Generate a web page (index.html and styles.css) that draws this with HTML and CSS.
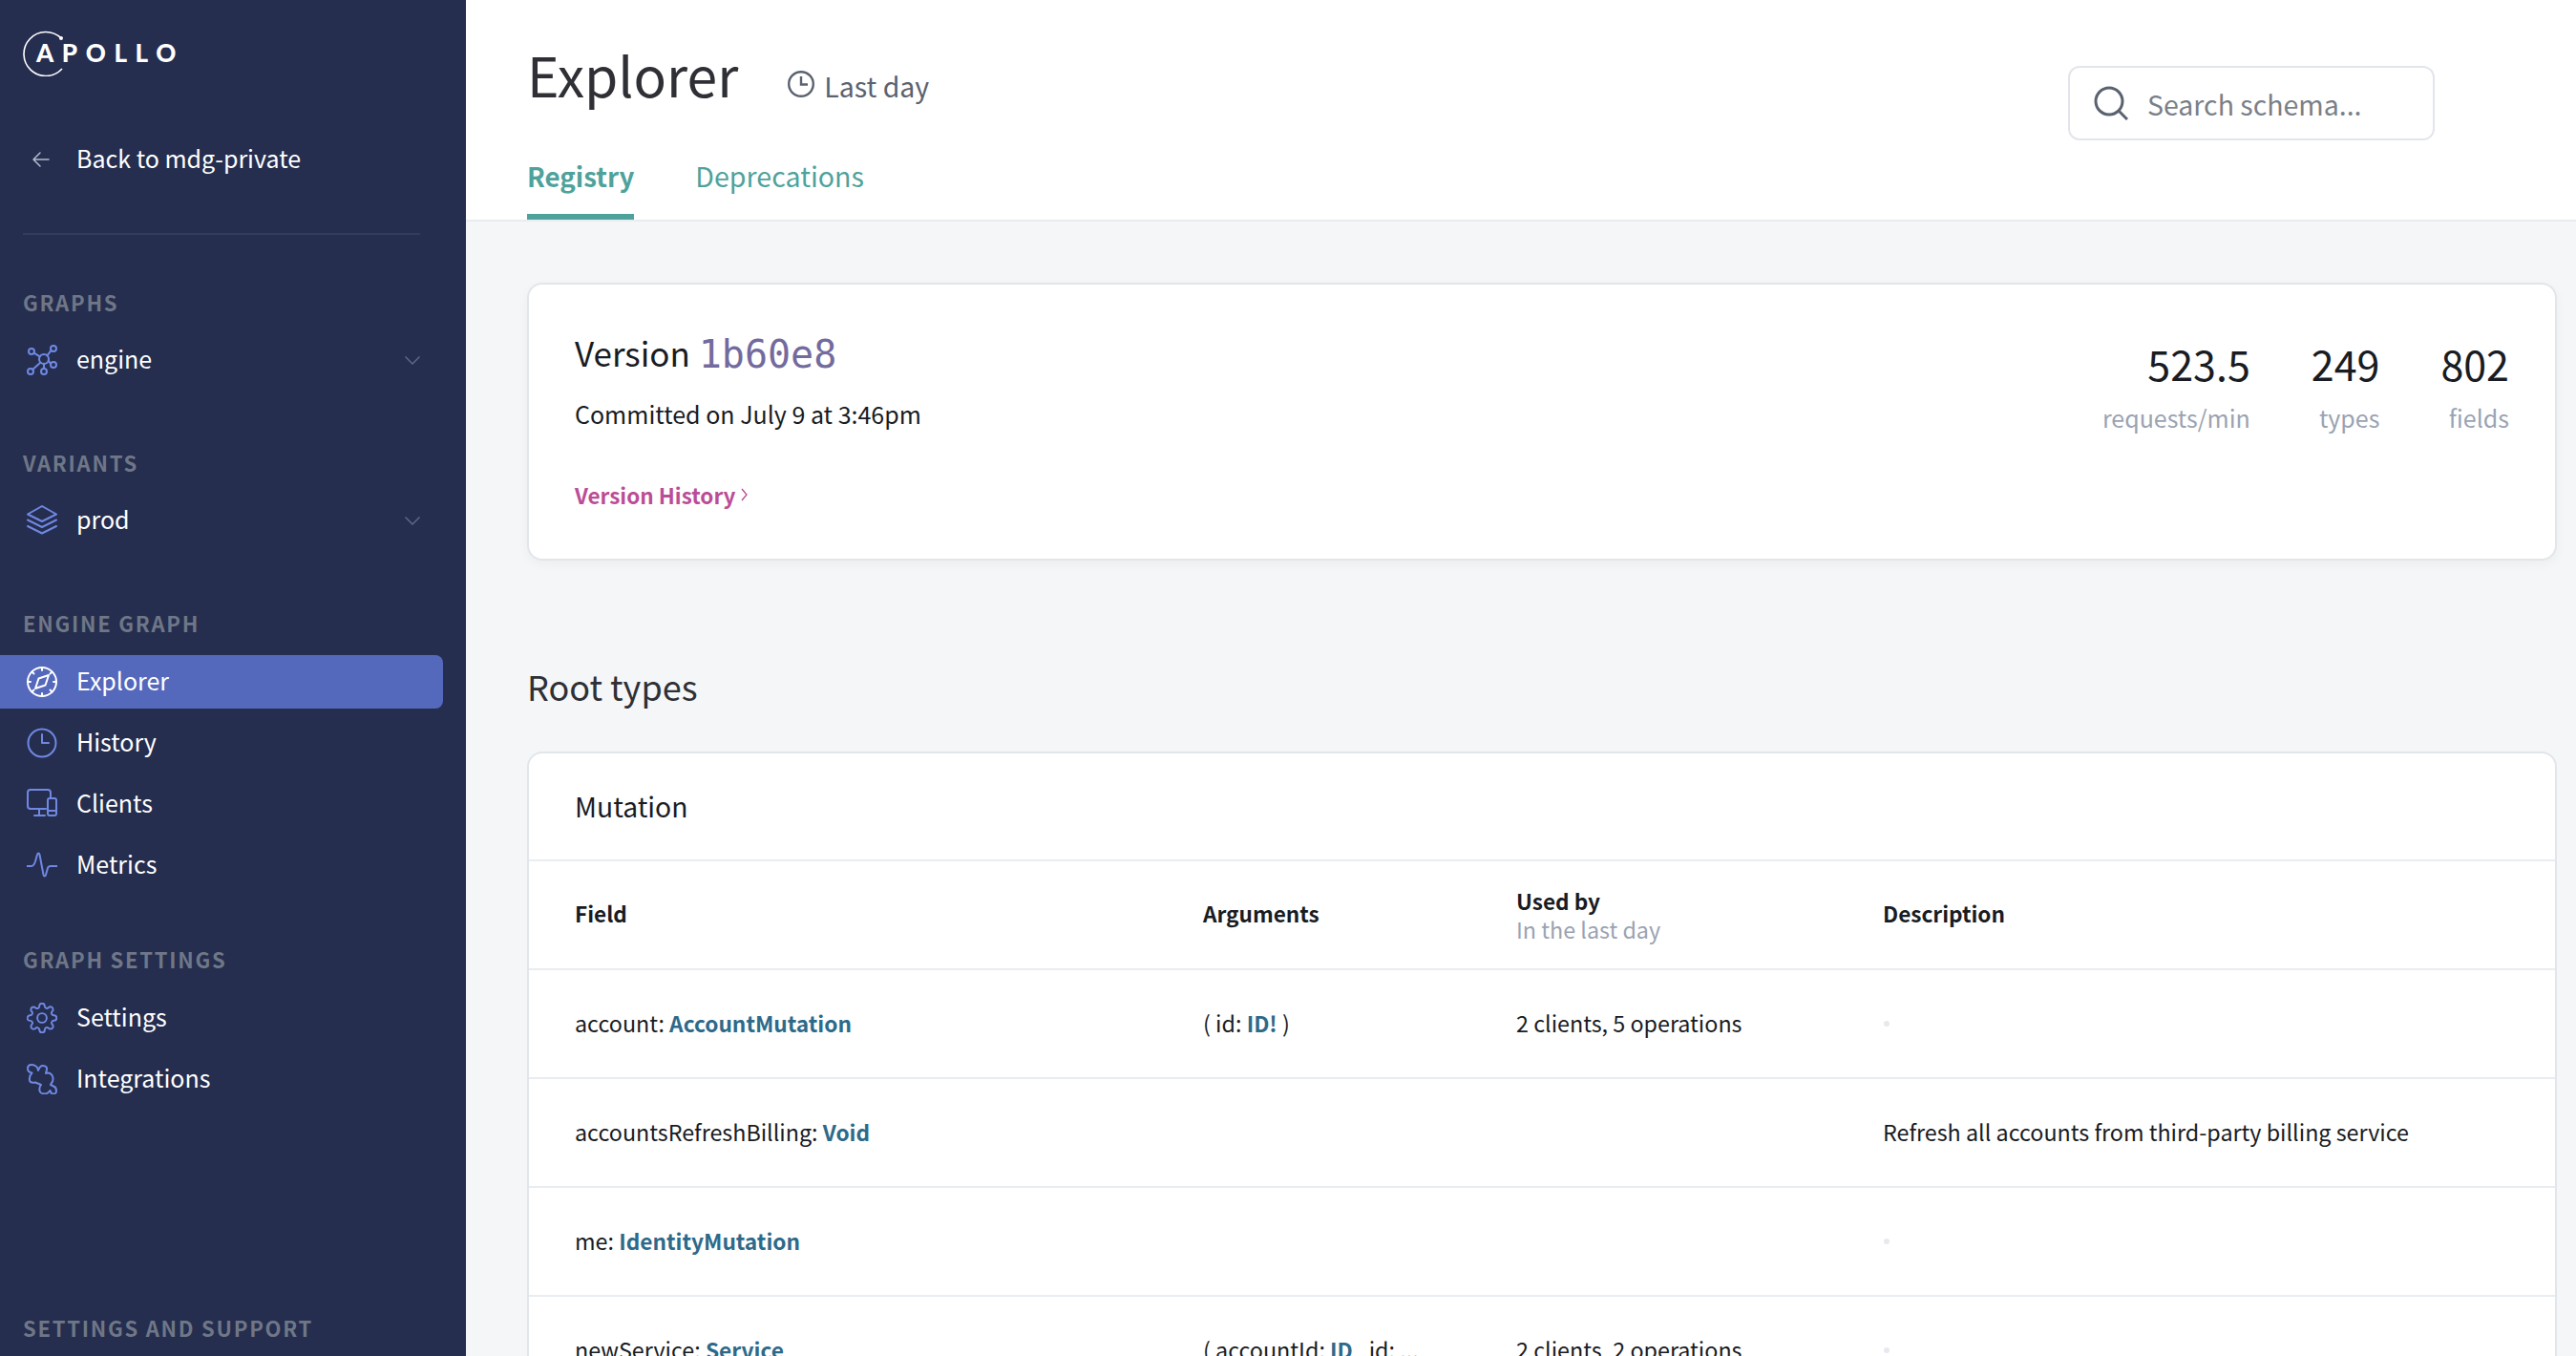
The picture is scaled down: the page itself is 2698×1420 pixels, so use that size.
FILE: index.html
```html
<!DOCTYPE html>
<html lang="en">
<head>
  <meta charset="UTF-8">
  <title>Explorer</title>
  <link rel="stylesheet" href="styles.css">
</head>
<body>
  <aside class="sidebar">
    <div class="logo">
      <svg class="logo-ring" viewBox="0 0 48 48"><path d="M40 8A23 23 0 1 0 41 40" fill="none" stroke="#fff" stroke-width="1.6"/><circle cx="40" cy="8" r="2" fill="#fff"/></svg>
      <span class="logo-text">APOLLO</span>
    </div>
    <a class="nav-row back">
      <svg class="icon back-arrow" viewBox="0 0 32 32"><path d="M23 16H8M14 9l-7 7 7 7"/></svg>
      Back to mdg-private
    </a>
    <div class="divider"></div>

    <div class="section section-select">
      <div class="section-label">Graphs</div>
      <a class="nav-row">
        <svg class="icon" viewBox="0 0 32 32"><circle cx="18" cy="15" r="5"/><circle cx="5" cy="7" r="3"/><circle cx="28" cy="4" r="3"/><circle cx="28" cy="21" r="3"/><circle cx="4" cy="28" r="3"/><circle cx="18" cy="28" r="3"/><path d="M7.600 8.600L13.700 12.400M25.600 5.800L21.400 11.400M25.100 20.200L22.800 16.600M6.200 26L14.500 18.600M18 25V20"/></svg>
        engine
        <svg class="chevron" viewBox="0 0 16 9"><path d="M0.500 0.500L8 8L15.500 0.500"/></svg>
      </a>
    </div>

    <div class="section section-select">
      <div class="section-label">Variants</div>
      <a class="nav-row">
        <svg class="icon" viewBox="0 0 32 32"><path d="M16 1L31 9.500L16 17L1 9.500Z"/><path d="M1 15.500L16 23L31 15.500M1 22L16 29.500L31 22"/></svg>
        prod
        <svg class="chevron" viewBox="0 0 16 9"><path d="M0.500 0.500L8 8L15.500 0.500"/></svg>
      </a>
    </div>

    <div class="section">
      <div class="section-label">Engine Graph</div>
      <a class="nav-row active">
        <svg class="icon" viewBox="0 0 32 32"><circle cx="16" cy="16" r="15"/><path d="M16 1v3M16 28v3M1 16h3M28 16h3M5.500 5.500l2 2M24.500 24.500l2 2M26.500 5.500l-2 2M7.500 24.500l-2 2"/><path d="M23 9L19.500 19.500L9 23L12.500 12.500Z"/></svg>
        Explorer
      </a>
      <a class="nav-row">
        <svg class="icon" viewBox="0 0 32 32"><circle cx="16" cy="16" r="14.500"/><path d="M16 7V16H23"/></svg>
        History
      </a>
      <a class="nav-row">
        <svg class="icon" viewBox="0 0 32 32"><path d="M20 21H4a3 3 0 0 1-3-3V4a3 3 0 0 1 3-3h18a3 3 0 0 1 3 3v6"/><path d="M13 21v7M8 28h11"/><rect x="22" y="10" width="9" height="18" rx="2"/><path d="M22 23h9"/></svg>
        Clients
      </a>
      <a class="nav-row">
        <svg class="icon" viewBox="0 0 32 32"><path d="M0 17H5C7 17 8 15 9 12L11 5C11.500 3 13 3 13.500 5L17.500 26C18 28 19.500 28 20 26L22 19C22.500 17.500 23 17 25 17H32"/></svg>
        Metrics
      </a>
    </div>

    <div class="section">
      <div class="section-label">Graph Settings</div>
      <a class="nav-row">
        <svg class="icon icon-thin" viewBox="0.500 0.500 23 23"><circle cx="12" cy="12" r="3.500"/><path d="M19.400 15a1.650 1.650 0 0 0 .33 1.820l.06.06a2 2 0 0 1 0 2.830 2 2 0 0 1-2.830 0l-.06-.06a1.650 1.650 0 0 0-1.820-.33 1.650 1.650 0 0 0-1 1.510V21a2 2 0 0 1-2 2 2 2 0 0 1-2-2v-.09A1.650 1.650 0 0 0 9 19.400a1.650 1.650 0 0 0-1.820.33l-.06.06a2 2 0 0 1-2.830 0 2 2 0 0 1 0-2.830l.06-.06a1.650 1.650 0 0 0 .33-1.820 1.650 1.650 0 0 0-1.510-1H3a2 2 0 0 1-2-2 2 2 0 0 1 2-2h.09A1.650 1.650 0 0 0 4.600 9a1.650 1.650 0 0 0-.33-1.820l-.06-.06a2 2 0 0 1 0-2.830 2 2 0 0 1 2.830 0l.06.06a1.650 1.650 0 0 0 1.820.33H9a1.650 1.650 0 0 0 1-1.510V3a2 2 0 0 1 2-2 2 2 0 0 1 2 2v.09a1.650 1.650 0 0 0 1 1.510 1.650 1.650 0 0 0 1.820-.33l.06-.06a2 2 0 0 1 2.830 0 2 2 0 0 1 0 2.830l-.06.06a1.650 1.650 0 0 0-.33 1.820V9a1.650 1.650 0 0 0 1.510 1H21a2 2 0 0 1 2 2 2 2 0 0 1-2 2h-.09a1.650 1.650 0 0 0-1.510 1z"/></svg>
        Settings
      </a>
      <a class="nav-row">
        <svg class="icon" viewBox="0 0 32 32"><path d="M1 5C1 2 3 1 5 1C8 1 11 3 11.500 5L12 7C13 4 15 2 17 2C20 2 21.500 4 21 6L20 10C23 9 26 10 27 13C28 16 28 18 26 20L25 22L29 24C31 25 31 27 31 29C31 31 29 31.500 27 31.500C25 31 25 29 24.500 28C23 30 21 31.500 19 31.500C16 31.500 13.500 30 13.500 28C13 25 14 23 15 22L9 19.500C6 20 3.500 20 3 17.500C2.500 14 3 12 5.500 9.500C2 9 1 7 1 5Z"/></svg>
        Integrations
      </a>
    </div>

    <div class="sidebar-foot section-label">Settings and Support</div>
  </aside>

  <main class="main">
    <header class="page-header">
      <div class="header-left">
        <div class="title-row">
          <h1 class="title">Explorer</h1>
          <div class="range">
            <svg class="range-clock" viewBox="0 0 28 28"><circle cx="14" cy="14" r="12.800"/><path d="M14 6V14.500H21"/></svg>
            Last day
          </div>
        </div>
        <nav class="tabs">
          <a class="tab tab-active">Registry</a>
          <a class="tab">Deprecations</a>
        </nav>
      </div>
      <div class="search">
        <svg class="search-icon" viewBox="0 0 36 36"><circle cx="16" cy="16" r="14"/><path d="M26 26L35 35"/></svg>
        <span>Search schema...</span>
      </div>
    </header>

    <div class="content">
      <section class="card version-card">
        <div>
          <div class="version-title">Version <code class="hash">1b60e8</code></div>
          <div class="committed">Committed on July 9 at 3:46pm</div>
          <a class="history-link">Version History <svg class="link-chevron" viewBox="0 0 7 14"><path d="M1 1L6 7L1 13"/></svg></a>
        </div>
        <div class="stats">
          <div class="stat"><div class="stat-value">523.5</div><div class="stat-label">requests/min</div></div>
          <div class="stat"><div class="stat-value">249</div><div class="stat-label">types</div></div>
          <div class="stat"><div class="stat-value">802</div><div class="stat-label">fields</div></div>
        </div>
      </section>

      <h2 class="root-title">Root types</h2>

      <section class="card table-card">
        <div class="table-title">Mutation</div>
        <div class="row head-row">
          <div>Field</div>
          <div>Arguments</div>
          <div>Used by<span class="head-sub">In the last day</span></div>
          <div>Description</div>
        </div>
        <div class="row">
          <div>account: <a class="type">AccountMutation</a></div>
          <div>( id: <a class="type">ID!</a> )</div>
          <div>2 clients, 5 operations</div>
          <div><span class="empty-dot"></span></div>
        </div>
        <div class="row">
          <div>accountsRefreshBilling: <a class="type">Void</a></div>
          <div></div>
          <div></div>
          <div>Refresh all accounts from third-party billing service</div>
        </div>
        <div class="row">
          <div>me: <a class="type">IdentityMutation</a></div>
          <div></div>
          <div></div>
          <div><span class="empty-dot"></span></div>
        </div>
        <div class="row">
          <div>newService: <a class="type">Service</a></div>
          <div>( accountId: <a class="type">ID</a> , id: ...</div>
          <div>2 clients, 2 operations</div>
          <div><span class="empty-dot"></span></div>
        </div>
      </section>
    </div>
  </main>
</body>
</html>
```

FILE: styles.css
```css
* {
  box-sizing: border-box;
}
body {
  margin: 0;
  height: 100vh;
  overflow: hidden;
  display: flex;
  font-family: "Noto Sans CJK SC", "Noto Sans", sans-serif;
  color: #191c23;
  background: #f4f6f8;
}

/* sidebar */
.sidebar {
  width: 488px;
  flex: none;
  display: flex;
  flex-direction: column;
  padding-top: 32px;
  background: #252e4f;
  color: #fff;
}
.logo {
  display: flex;
  align-items: center;
  height: 48px;
  margin-left: 24px;
}
.logo-ring {
  width: 48px;
  height: 48px;
  flex: none;
}
.logo-text {
  margin: -2px 0 0 -34px;
  font-family: Lato, sans-serif;
  font-weight: 900;
  font-size: 26px;
  line-height: 46px;
  letter-spacing: 8.6px;
}
.nav-row {
  display: flex;
  align-items: center;
  height: 56px;
  width: 464px;
  margin-bottom: 8px;
  padding: 0 24px 4px 28px;
  border-radius: 0 8px 8px 0;
  font-size: 25px;
  line-height: 50px;
}
.nav-row.active {
  background: #5468bc;
}
.back {
  margin-top: 59px;
  margin-bottom: 0;
}
.icon {
  width: 32px;
  height: 32px;
  flex: none;
  margin: 4px 20px 0 0;
  fill: none;
  stroke: #7088e2;
  stroke-width: 2;
  stroke-linecap: round;
  stroke-linejoin: round;
}
.icon-thin {
  stroke-width: 1.4;
}
.active .icon {
  stroke: #fff;
}
.back-arrow {
  stroke: #b4bbcc;
  stroke-width: 1.5;
}
.chevron {
  width: 16px;
  height: 9px;
  margin: 4px 0 0 auto;
  fill: none;
  stroke: #5f6782;
  stroke-width: 1.5;
}
.divider {
  height: 2px;
  margin: 49px 48px 8px 24px;
  background: #323c5f;
}
.section {
  margin-top: 48px;
}
.section-select {
  padding-bottom: 9px;
}
.section-label {
  height: 30px;
  margin: 0 0 18px 24px;
  font-size: 22px;
  line-height: 28px;
  font-weight: 600;
  letter-spacing: 1.75px;
  text-transform: uppercase;
  color: #6f7787;
}
.section-select .section-label {
  margin-bottom: 17px;
}
.sidebar-foot {
  margin-top: auto;
  margin-bottom: 14px;
}

/* header */
.main {
  flex: 1;
  min-width: 0;
  display: flex;
  flex-direction: column;
}
.page-header {
  flex: none;
  display: flex;
  justify-content: space-between;
  height: 232px;
  padding: 0 148px 0 64px;
  background: #fff;
  border-bottom: 2px solid #e9ecf0;
}
.header-left {
  display: flex;
  flex-direction: column;
  justify-content: flex-end;
}
.title-row {
  display: flex;
  align-items: flex-start;
  height: 82px;
  margin-bottom: 44px;
}
.title {
  margin: 0;
  font-size: 57px;
  line-height: 82px;
  font-weight: 400;
  color: #2f3035;
}
.range {
  display: flex;
  align-items: center;
  height: 40px;
  margin: 33px 0 0 52px;
  font-size: 28.5px;
  color: #5a6270;
}
.range-clock {
  width: 28px;
  height: 28px;
  margin: 0 10px 2px 0;
  fill: none;
  stroke: #5a6270;
  stroke-width: 2.4;
}
.tabs {
  display: flex;
  gap: 64px;
}
.tab {
  height: 68px;
  font-size: 28.6px;
  line-height: 44px;
  color: #4fa29b;
}
.tab-active {
  font-size: 27.7px;
  font-weight: 600;
  border-bottom: 6px solid #4fa29b;
}
.search {
  display: flex;
  align-items: center;
  width: 384px;
  height: 78px;
  margin-top: 69px;
  padding-left: 25px;
  border: 2px solid #e2e6ec;
  border-radius: 12px;
  font-size: 28.5px;
  color: #7a7f88;
}
.search-icon {
  width: 36px;
  height: 36px;
  margin-right: 20px;
  fill: none;
  stroke: #5a6270;
  stroke-width: 3;
}

/* content */
.content {
  padding: 64px 20px 0 64px;
}
.card {
  background: #fff;
  border: 2px solid #e2e6ea;
  border-radius: 16px;
}
.version-card {
  display: flex;
  justify-content: space-between;
  height: 291px;
  padding: 46px 48px 0 48px;
  box-shadow: 0 4px 12px rgba(18, 21, 26, 0.04);
}
.version-title {
  font-size: 35px;
  line-height: 50px;
}
.hash {
  margin-left: 1px;
  font-family: "DejaVu Sans Mono", monospace;
  font-size: 40px;
  line-height: 50px;
  vertical-align: -1px;
  color: #736a9e;
}
.committed {
  margin-top: 17px;
  font-size: 25px;
  line-height: 40px;
}
.history-link {
  display: flex;
  align-items: center;
  gap: 6px;
  margin-top: 47px;
  font-size: 22.5px;
  line-height: 36px;
  font-weight: 600;
  color: #bb4d98;
}
.link-chevron {
  width: 7px;
  height: 14px;
  fill: none;
  stroke: #b5408f;
  stroke-width: 1.2;
}
.stats {
  display: flex;
  gap: 64px;
  margin-top: 8px;
  text-align: right;
}
.stat-value {
  font-size: 43px;
  line-height: 56px;
}
.stat-label {
  margin-top: 11px;
  font-size: 25px;
  line-height: 36px;
  color: #9aa3b2;
}
.root-title {
  margin: 106px 0 44px;
  font-size: 36px;
  line-height: 50px;
  font-weight: 400;
  color: #2f3035;
}
.table-card {
  font-size: 23.3px;
}
.table-title {
  height: 111px;
  padding-left: 48px;
  font-size: 28.3px;
  line-height: 109px;
}
.row {
  display: grid;
  grid-template-columns: 658px 328px 384px 1fr;
  align-items: center;
  height: 114px;
  padding: 0 0 3px 48px;
  border-top: 2px solid #e9ecf0;
  white-space: nowrap;
}
.head-row {
  font-size: 22.6px;
  font-weight: 600;
}
.head-sub {
  display: block;
  font-size: 23.3px;
  line-height: 26px;
  font-weight: 400;
  color: #9aa3b2;
}
.type {
  font-size: 22.7px;
  font-weight: 600;
  color: #2d6a8a;
}
.empty-dot {
  display: block;
  width: 6px;
  height: 6px;
  margin: 3px 0 0 1px;
  border-radius: 50%;
  background: #e6eaef;
}
```
